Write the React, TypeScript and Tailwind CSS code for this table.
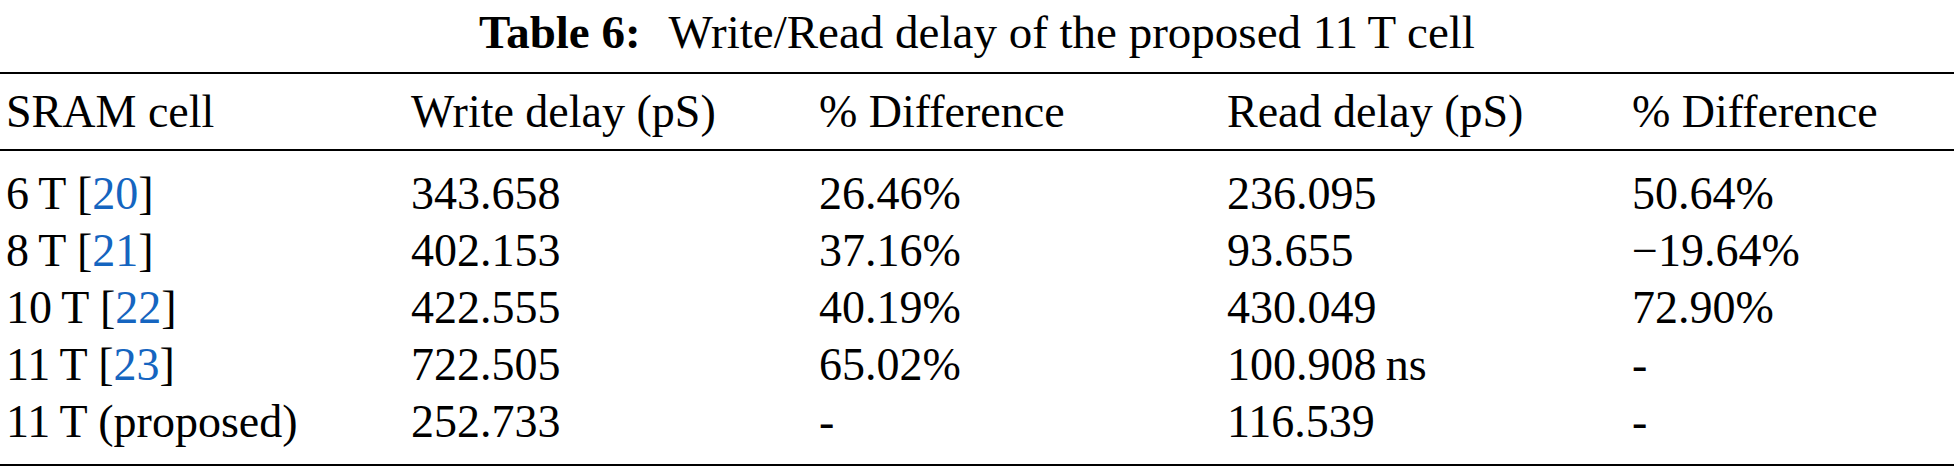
import React from 'react';

type Row = { cell: string; ref?: string; write: string; wdiff: string; read: string; rdiff: string };

const rows: Row[] = [
  { cell: '6\u2009T', ref: '20', write: '343.658', wdiff: '26.46%', read: '236.095', rdiff: '50.64%' },
  { cell: '8\u2009T', ref: '21', write: '402.153', wdiff: '37.16%', read: '93.655', rdiff: '\u221219.64%' },
  { cell: '10\u2009T', ref: '22', write: '422.555', wdiff: '40.19%', read: '430.049', rdiff: '72.90%' },
  { cell: '11\u2009T', ref: '23', write: '722.505', wdiff: '65.02%', read: '100.908\u2009ns', rdiff: '-' },
  { cell: '11\u2009T (proposed)', write: '252.733', wdiff: '-', read: '116.539', rdiff: '-' },
];

const cols = 'grid grid-cols-[405px_408px_408px_405px_1fr] items-center';

export default function App() {
  return (
    <div className="w-[1954px] h-[475px] bg-white text-black font-['Liberation_Serif',serif] text-[46px] leading-none overflow-hidden">
      <div className="h-[72px] flex items-center justify-center pb-[8px] text-[47px]">
        <span className="font-bold">Table 6:</span>
        <span className="ml-[28px]">Write/Read delay of the proposed 11&#8201;T cell</span>
      </div>
      <div className="border-t-2 border-black" />
      <div className={`${cols} h-[75px] pl-[6px]`}>
        <div>SRAM cell</div>
        <div>Write delay (pS)</div>
        <div>% Difference</div>
        <div>Read delay (pS)</div>
        <div>% Difference</div>
      </div>
      <div className="border-t-2 border-black" />
      <div className="py-[14px]">
        {rows.map((r) => (
          <div key={r.cell + r.write} className={`${cols} h-[57px] pl-[6px]`}>
            <div>
              {r.cell}
              {r.ref && (
                <>
                  {' ['}
                  <span className="text-[#1565c0]">{r.ref}</span>
                  {']'}
                </>
              )}
            </div>
            <div>{r.write}</div>
            <div>{r.wdiff}</div>
            <div>{r.read}</div>
            <div>{r.rdiff}</div>
          </div>
        ))}
      </div>
      <div className="border-t-2 border-black" />
    </div>
  );
}
